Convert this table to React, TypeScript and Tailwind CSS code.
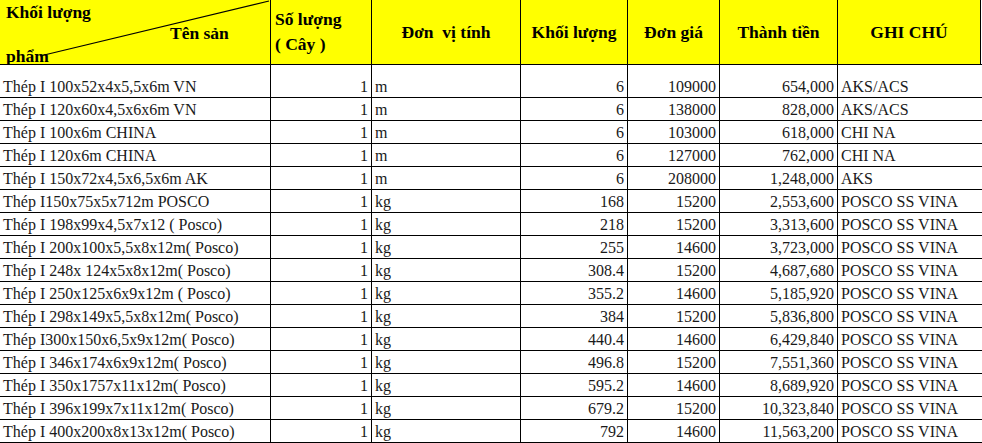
const rows: [string, string, string, string, string, string][] = [
  ['Thép I 100x52x4x5,5x6m VN', 'm', '6', '109000', '654,000', 'AKS/ACS'],
  ['Thép I 120x60x4,5x6x6m VN', 'm', '6', '138000', '828,000', 'AKS/ACS'],
  ['Thép I 100x6m CHINA', 'm', '6', '103000', '618,000', 'CHI NA'],
  ['Thép I 120x6m CHINA', 'm', '6', '127000', '762,000', 'CHI NA'],
  ['Thép I 150x72x4,5x6,5x6m AK', 'm', '6', '208000', '1,248,000', 'AKS'],
  ['Thép I150x75x5x712m POSCO', 'kg', '168', '15200', '2,553,600', 'POSCO SS VINA'],
  ['Thép I 198x99x4,5x7x12 ( Posco)', 'kg', '218', '15200', '3,313,600', 'POSCO SS VINA'],
  ['Thép I 200x100x5,5x8x12m( Posco)', 'kg', '255', '14600', '3,723,000', 'POSCO SS VINA'],
  ['Thép I 248x 124x5x8x12m( Posco)', 'kg', '308.4', '15200', '4,687,680', 'POSCO SS VINA'],
  ['Thép I 250x125x6x9x12m ( Posco)', 'kg', '355.2', '14600', '5,185,920', 'POSCO SS VINA'],
  ['Thép I 298x149x5,5x8x12m( Posco)', 'kg', '384', '15200', '5,836,800', 'POSCO SS VINA'],
  ['Thép I300x150x6,5x9x12m( Posco)', 'kg', '440.4', '14600', '6,429,840', 'POSCO SS VINA'],
  ['Thép I 346x174x6x9x12m( Posco)', 'kg', '496.8', '15200', '7,551,360', 'POSCO SS VINA'],
  ['Thép I 350x1757x11x12m( Posco)', 'kg', '595.2', '14600', '8,689,920', 'POSCO SS VINA'],
  ['Thép I 396x199x7x11x12m( Posco)', 'kg', '679.2', '15200', '10,323,840', 'POSCO SS VINA'],
  ['Thép I 400x200x8x13x12m( Posco)', 'kg', '792', '14600', '11,563,200', 'POSCO SS VINA'],
]

const th = 'border border-black bg-[#ffff00] font-bold text-[17.5px] align-middle p-0'
const td = 'border border-black px-[3px] pt-0 pb-[1px] align-bottom whitespace-nowrap overflow-hidden leading-[19px]'

export default function App() {
  return (
    <div className="w-[982px] h-[443px] overflow-hidden bg-white text-[#1a1a1a] [font-family:Liberation_Serif,serif]">
      <table className="table-fixed border-collapse w-[1040px] text-[16px] -ml-[1px] -mt-[1px]">
        <colgroup>
          <col className="w-[271px]" />
          <col className="w-[101px]" />
          <col className="w-[149px]" />
          <col className="w-[107px]" />
          <col className="w-[92px]" />
          <col className="w-[118px]" />
          <col className="w-[143px]" />
          <col className="w-[59px]" />
        </colgroup>
        <thead>
          <tr className="h-[65px] text-black">
            <th className={th + ' relative overflow-hidden'}>
              <svg className="absolute inset-0" width="271" height="65">
                <line x1="40" y1="56" x2="269" y2="1" stroke="#000" strokeWidth="1.2" />
              </svg>
              <span className="absolute left-[6px] top-[2px] leading-[20px]">Khối lượng</span>
              <span className="absolute left-[170px] top-[23px] leading-[20px]">Tên sản</span>
              <span className="absolute left-[6px] top-[46px] leading-[20px]">phẩm</span>
            </th>
            <th className={th + ' text-left pl-[4px] leading-[25px]'}>
              Số lượng
              <br />( Cây )
            </th>
            <th className={th + ' text-center'}>Đơn&nbsp; vị tính</th>
            <th className={th + ' text-center'}>Khối lượng</th>
            <th className={th + ' text-center'}>Đơn giá</th>
            <th className={th + ' text-center'}>Thành tiền</th>
            <th className={th + ' text-center'}>GHI CHÚ</th>
            <th className="border-l border-black bg-white p-0"></th>
          </tr>
        </thead>
        <tbody>
          {rows.map((r, i) => (
            <tr key={i} className={i === 0 ? 'h-[33px]' : 'h-[23px]'}>
              <td className={td + ' text-left'}>{r[0]}</td>
              <td className={td + ' text-right'}>1</td>
              <td className={td + ' text-left'}>{r[1]}</td>
              <td className={td + ' text-right'}>{r[2]}</td>
              <td className={td + ' text-right'}>{r[3]}</td>
              <td className={td + ' text-right'}>{r[4]}</td>
              <td className={td + ' text-left border-r-0'} colSpan={2}>{r[5]}</td>
            </tr>
          ))}
        </tbody>
      </table>
    </div>
  )
}
